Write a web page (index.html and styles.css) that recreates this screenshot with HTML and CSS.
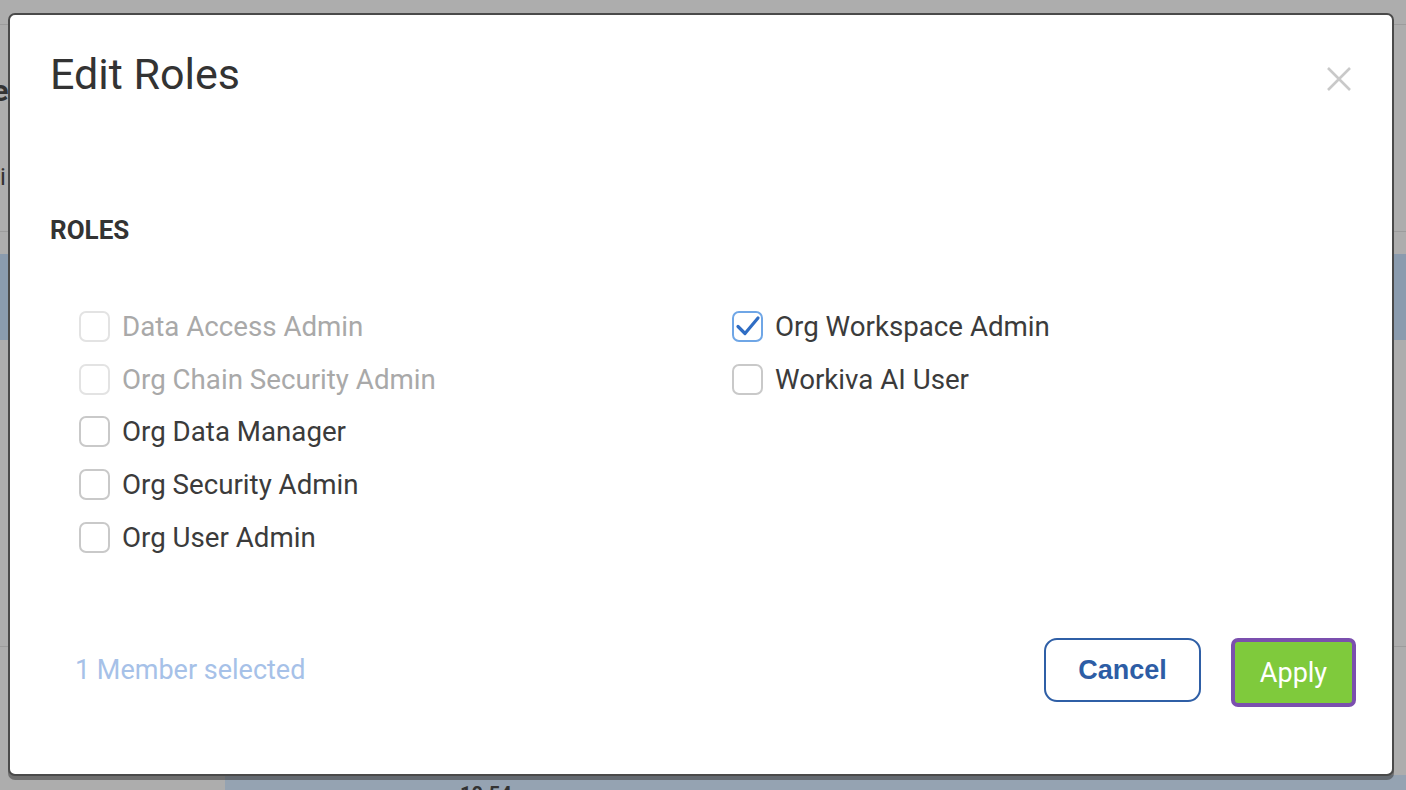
FILE: index.html
```html
<!DOCTYPE html>
<html lang="en">
<head>
    <meta charset="UTF-8">
    <title>Edit Roles</title>
    <link rel="stylesheet" href="styles.css">
</head>
<body>
    <div class="page">
        <div class="page-top"></div>
        <div class="page-head">
            <div class="page-title">Manage</div>
            <div class="page-sub">i</div>
        </div>
        <div class="page-row selected"></div>
        <div class="page-row tall"></div>
        <div class="page-row right-line"></div>
        <div class="page-row right-line short"></div>
        <div class="page-foot">
            <span class="foot-gap"></span>
            <span class="foot-cell">10.54</span>
        </div>
    </div>

    <div class="overlay">
        <div class="modal">
            <div class="modal-header">
                <h1>Edit Roles</h1>
                <button class="close" aria-label="Close">
                    <svg width="26" height="26" viewBox="0 0 26 26">
                        <path d="M2 2 L24 24 M24 2 L2 24" stroke="#c9c9c9" stroke-width="2.6" fill="none"/>
                    </svg>
                </button>
            </div>

            <div class="modal-body">
                <h2>ROLES</h2>
                <div class="roles">
                    <div class="role-col">
                        <label class="role disabled"><span class="box"></span>Data Access Admin</label>
                        <label class="role disabled"><span class="box"></span>Org Chain Security Admin</label>
                        <label class="role"><span class="box"></span>Org Data Manager</label>
                        <label class="role"><span class="box"></span>Org Security Admin</label>
                        <label class="role"><span class="box"></span>Org User Admin</label>
                    </div>
                    <div class="role-col">
                        <label class="role checked">
                            <span class="box">
                                <svg width="26" height="26" viewBox="0 0 26 26">
                                    <path d="M3 13.5 L10 20.5 L23 5" stroke="#2f6dc4" stroke-width="3.2" fill="none" stroke-linecap="round" stroke-linejoin="round"/>
                                </svg>
                            </span>Org Workspace Admin
                        </label>
                        <label class="role"><span class="box"></span>Workiva AI User</label>
                    </div>
                </div>
            </div>

            <div class="modal-footer">
                <span class="selected-count">1 Member selected</span>
                <div class="actions">
                    <button class="btn btn-cancel">Cancel</button>
                    <button class="btn btn-apply">Apply</button>
                </div>
            </div>
        </div>
    </div>
</body>
</html>
```

FILE: styles.css
```css
* {
    margin: 0;
    padding: 0;
    box-sizing: border-box;
}

body {
    width: 1406px;
    height: 790px;
    overflow: hidden;
    background-color: #adadad;
    font-family: Roboto, "Noto Sans", sans-serif;
    color: #3b3b3b;
    position: relative;
}

/* page behind the overlay */
.page {
    display: flex;
    flex-direction: column;
    height: 100%;
}

.page-top {
    height: 25px;
    border-bottom: 1px solid #9c9c9c;
}

.page-head {
    height: 207px;
    border-bottom: 1px solid #9c9c9c;
}

.page-title {
    font-size: 30px;
    font-weight: 700;
    color: #333;
    margin-top: 48px;
    margin-left: -100px;
    white-space: nowrap;
}

.page-sub {
    font-size: 24px;
    color: #333;
    margin-top: 55px;
}

.page-row {
    border-bottom: 1px solid #9c9c9c;
}

.page-row.selected {
    margin-top: 22px;
    height: 86px;
    background-color: #8a9bae;
    border-bottom: none;
}

.page-row.tall {
    height: 197px;
    border-bottom: none;
}

.page-row.right-line {
    height: 110px;
}

.page-row.short {
    height: 0;
    border-bottom: none;
}

.page-foot {
    margin-top: auto;
    height: 15px;
    display: flex;
    overflow: hidden;
}

.foot-gap {
    width: 225px;
}

.foot-cell {
    flex: 1;
    background-color: #95a3b2;
    padding-left: 235px;
    font-size: 20px;
    font-weight: 700;
    color: #333;
    line-height: 38px;
}

/* modal */
.overlay {
    position: absolute;
    left: 8px;
    top: 13px;
}

.modal {
    width: 1386px;
    height: 763px;
    background-color: #fff;
    border: 2px solid #4a4a4a;
    border-radius: 7px;
    box-shadow: 0 4px 0 rgba(60, 60, 60, 0.55);
    display: flex;
    flex-direction: column;
    padding: 34px 36px 0 40px;
}

.modal-header {
    display: flex;
    justify-content: space-between;
    align-items: flex-start;
}

.modal-header h1 {
    font-size: 43px;
    font-weight: 400;
    color: #333;
    line-height: 50px;
}

.close {
    background: none;
    border: none;
    margin-top: 17px;
    margin-right: 4px;
    cursor: pointer;
}

.modal-body {
    margin-top: 116px;
}

.modal-body h2 {
    font-size: 26px;
    font-weight: 700;
    color: #333;
    line-height: 30px;
}

.roles {
    display: grid;
    grid-template-columns: 653px 1fr;
    margin-top: 55px;
    padding-left: 29px;
}

.role {
    display: flex;
    align-items: center;
    height: 52.8px;
    font-size: 27.7px;
    color: #3b3b3b;
}

.role.disabled {
    color: #a9a9a9;
}

.box {
    width: 31px;
    height: 31px;
    border: 2px solid #c9c9c9;
    border-radius: 7px;
    margin-right: 12px;
    display: flex;
    align-items: center;
    justify-content: center;
    flex-shrink: 0;
}

.role.disabled .box {
    border-color: #e3e3e3;
}

.role.checked .box {
    border-color: #6fa6e6;
}

.modal-footer {
    margin-top: auto;
    margin-bottom: 67px;
    display: flex;
    justify-content: space-between;
    align-items: center;
}

.selected-count {
    font-size: 27px;
    color: #a6c1e8;
    padding-left: 25px;
}

.actions {
    display: flex;
    align-items: center;
    gap: 30px;
}

.btn {
    cursor: pointer;
    font-size: 27px;
}

.btn-cancel {
    width: 157px;
    height: 64px;
    background-color: #fff;
    border: 2px solid #2f5fa6;
    border-radius: 13px;
    color: #2d5da5;
    font-family: "Liberation Sans", Arial, sans-serif;
    font-weight: 700;
}

.btn-apply {
    width: 125px;
    height: 69px;
    margin-top: 5px;
    background-color: #7fca3c;
    border: 4px solid #7b4fae;
    border-radius: 7px;
    color: #fff;
    font-family: Roboto, sans-serif;
    font-weight: 400;
}
```
